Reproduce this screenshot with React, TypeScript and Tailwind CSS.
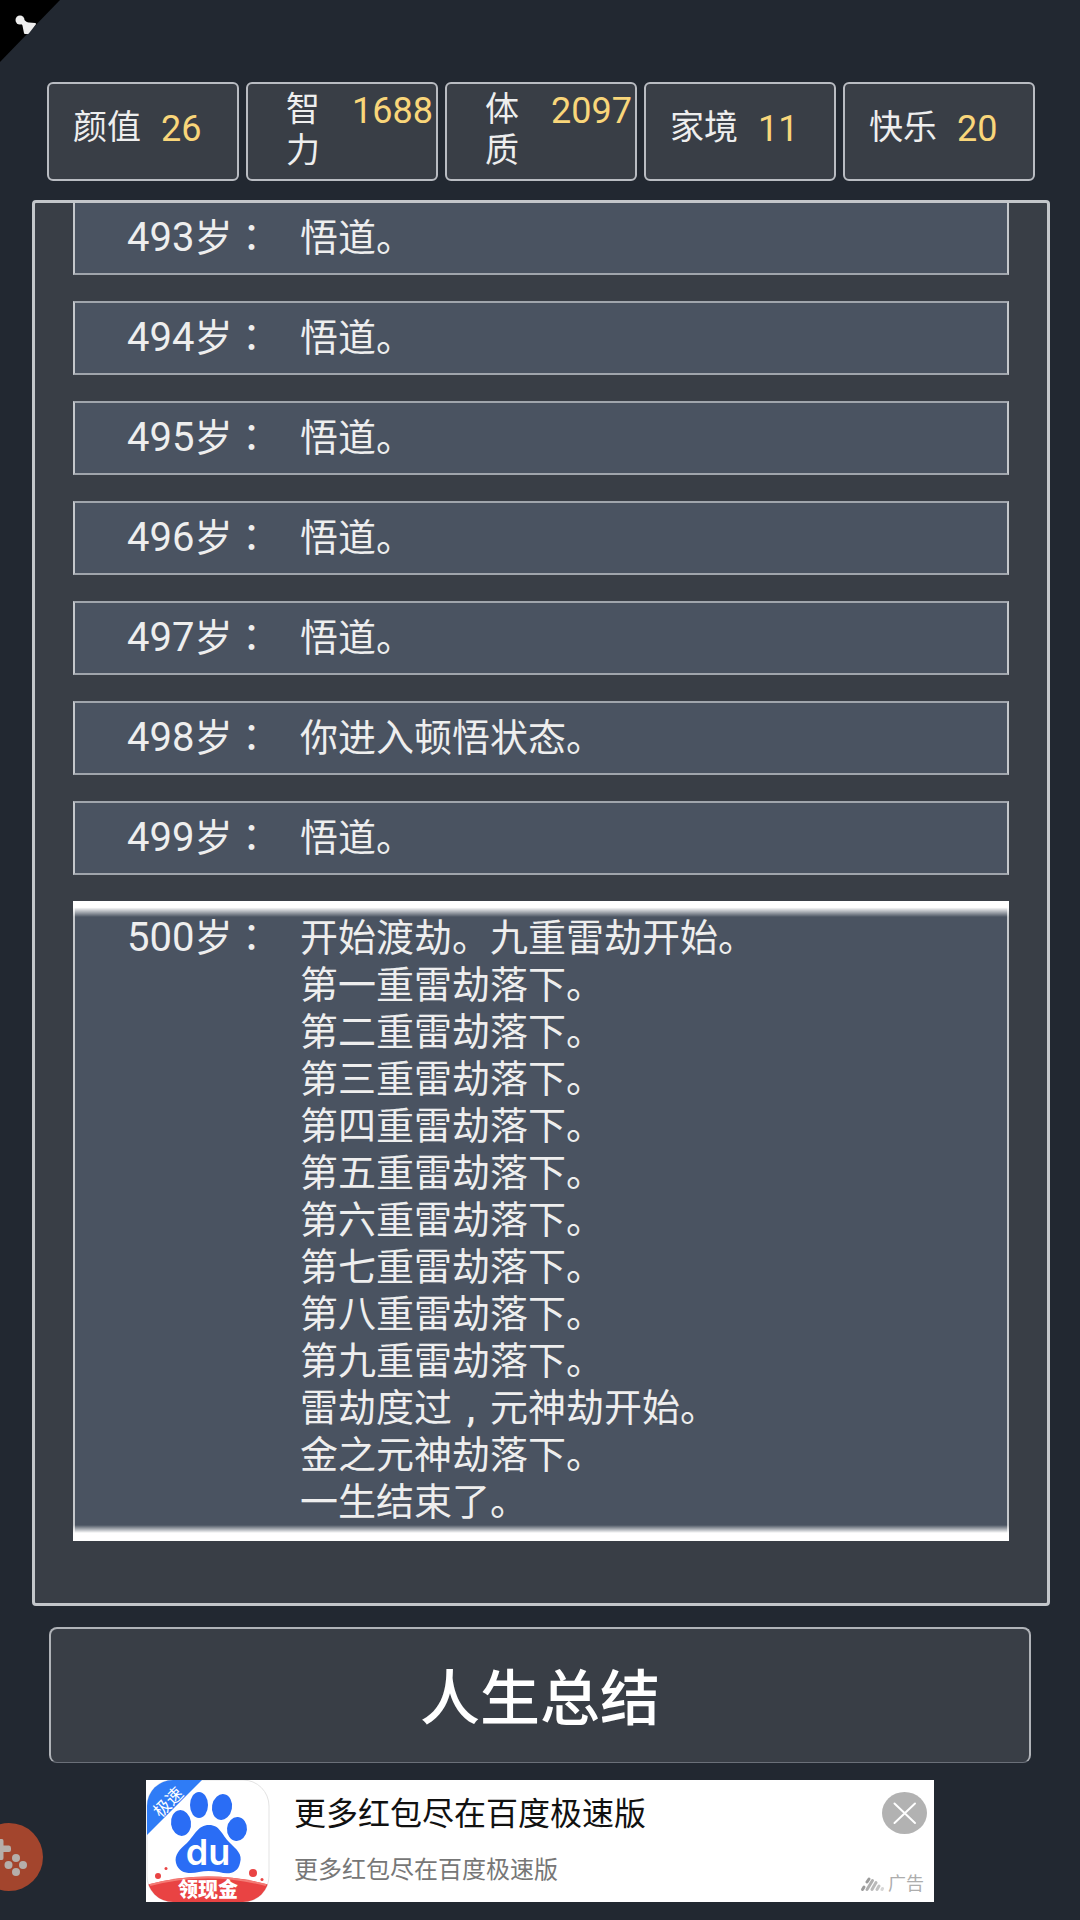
import React from "react";

interface Stat {
  label: string;
  value: number;
}

interface LifeEvent {
  age: number;
  lines: string[];
}

const stats: Stat[] = [
  { label: "颜值", value: 26 },
  { label: "智力", value: 1688 },
  { label: "体质", value: 2097 },
  { label: "家境", value: 11 },
  { label: "快乐", value: 20 },
];

const events: LifeEvent[] = [
  { age: 493, lines: ["悟道。"] },
  { age: 494, lines: ["悟道。"] },
  { age: 495, lines: ["悟道。"] },
  { age: 496, lines: ["悟道。"] },
  { age: 497, lines: ["悟道。"] },
  { age: 498, lines: ["你进入顿悟状态。"] },
  { age: 499, lines: ["悟道。"] },
  {
    age: 500,
    lines: [
      "开始渡劫。九重雷劫开始。",
      "第一重雷劫落下。",
      "第二重雷劫落下。",
      "第三重雷劫落下。",
      "第四重雷劫落下。",
      "第五重雷劫落下。",
      "第六重雷劫落下。",
      "第七重雷劫落下。",
      "第八重雷劫落下。",
      "第九重雷劫落下。",
      "雷劫度过，元神劫开始。",
      "金之元神劫落下。",
      "一生结束了。",
    ],
  },
];

function StatBox({ label, value }: Stat) {
  const wide = value > 999;
  return (
    <div className="flex h-[99px] flex-1 items-center rounded-md border-2 border-[#b9bcc2] bg-[#393e46]">
      {wide ? (
        <dl className="flex w-full items-start justify-between pb-1 pl-[38px] pr-[3px] leading-[41px]">
          <dt className="w-[34px] text-[34px] text-[#eeeeee]">{label}</dt>
          <dd className="pt-0.5 text-[36px] text-[#f9d67a]">{value}</dd>
        </dl>
      ) : (
        <dl className="flex items-start gap-5 pb-1.5 pl-6 leading-[41px]">
          <dt className="text-[34px] text-[#eeeeee]">{label}</dt>
          <dd className="pt-0.5 text-[36px] text-[#f9d67a]">{value}</dd>
        </dl>
      )}
    </div>
  );
}

// The comma sits in the middle of its cell
function EventLine({ text }: { text: string }) {
  const parts = text.split("，");
  return (
    <p>
      {parts.map((part, i) => (
        <React.Fragment key={i}>
          {i > 0 && <span className="inline-block w-[38px] text-center font-medium">,</span>}
          {part}
        </React.Fragment>
      ))}
    </p>
  );
}

function EventRow({ age, lines }: LifeEvent) {
  const last = lines.length > 1;
  return (
    <li
      className={
        last
          ? "relative flex border-2 border-[#c4c7cb] bg-[#4a5361] pb-[13px] pl-[52px] pt-3"
          : "flex h-[74px] items-center border-2 border-[#a0a5ac] border-x-[#c4c7cb] bg-[#4a5361] pl-[52px] first:h-[72px] first:border-t-0"
      }
    >
      {last && (
        <>
          <span className="absolute -inset-x-0.5 -top-0.5 h-4 bg-linear-to-b from-white from-40% to-transparent" />
          <span className="absolute -inset-x-0.5 -bottom-0.5 h-4 bg-linear-to-t from-white from-50% to-transparent" />
        </>
      )}
      <span className="w-[173px] shrink-0">
        <span className="text-[40px] leading-none">{age}</span>岁
        <span className="font-['Noto_Sans_CJK_JP',sans-serif] leading-none">：</span>
      </span>
      <div>
        {lines.map((line) => (
          <EventLine key={line} text={line} />
        ))}
      </div>
    </li>
  );
}

function BaiduIcon() {
  return (
    <svg viewBox="0 0 124 122" className="h-[122px] w-[124px] shrink-0" role="img" aria-label="百度极速版">
      <defs>
        <clipPath id="tile">
          <rect x="1" y="0" width="122" height="122" rx="26" />
        </clipPath>
      </defs>
      <rect x="1" y="0" width="122" height="122" rx="26" fill="#fff" stroke="#e3e3e3" />
      <g clipPath="url(#tile)">
        <path d="M0 0H56L0 56Z" fill="#2f7cf6" />
        <path d="M0 105Q62 88 124 105V122H0Z" fill="#e94343" />
        <path d="M4 105Q62 90 120 105" fill="none" stroke="#f47b75" strokeWidth="2" />
      </g>
      <g fill="#2a6df5">
        <ellipse cx="35" cy="43" rx="10" ry="13" transform="rotate(-8 35 43)" />
        <ellipse cx="53" cy="25" rx="9" ry="13" />
        <ellipse cx="76" cy="27" rx="10" ry="13" transform="rotate(10 76 27)" />
        <ellipse cx="91" cy="49" rx="10" ry="12" transform="rotate(5 91 49)" />
        <path d="M63 45C52 45 49 55 41 63C34 69 28 75 30 83C33 94 44 94 53 92Q62 90 73 92C83 95 92 93 94 83C97 74 90 69 84 63C75 54 74 45 63 45Z" />
      </g>
      <text x="62" y="85" textAnchor="middle" fill="#fff" fontFamily="Inter, sans-serif" fontWeight="600" fontSize="36">
        du
      </text>
      <text x="23" y="28" textAnchor="middle" fill="#fff" fontFamily="'Noto Sans CJK SC', sans-serif" fontSize="17" transform="rotate(-45 23 23)">
        极速
      </text>
      <text x="62" y="117" textAnchor="middle" fill="#fff" fontFamily="'Noto Sans CJK SC', sans-serif" fontWeight="900" fontSize="20">
        领现金
      </text>
      <g fill="#e94343">
        <circle cx="12" cy="96" r="3" />
        <circle cx="20" cy="88.500" r="1.500" />
        <circle cx="107" cy="93" r="4" />
        <circle cx="116" cy="99.500" r="1.500" />
      </g>
    </svg>
  );
}

function AdBanner() {
  return (
    <aside className="relative mx-auto mt-[17px] flex w-[788px] max-w-full bg-white">
      <BaiduIcon />
      <div className="flex flex-col justify-between pb-4 pl-6 pt-3">
        <h2 className="text-[32px] leading-[44px] text-[#111111]">更多红包尽在百度极速版</h2>
        <p className="text-[24px] leading-[32px] text-[#777777]">更多红包尽在百度极速版</p>
      </div>
      <button type="button" aria-label="关闭广告" className="absolute right-[7px] top-3">
        <svg viewBox="0 0 45 42" className="h-[42px] w-[45px]">
          <ellipse cx="22.500" cy="21" rx="22.500" ry="21" fill="#b2b2b2" />
          <path d="M12.500 11.500L33 31M33 11.500L12.500 31" stroke="#fff" strokeWidth="2" strokeLinecap="round" />
        </svg>
      </button>
      <div className="absolute bottom-1.5 right-2.5 flex items-center gap-1 text-[18px] leading-6 text-[#adadad]">
        <svg viewBox="0 0 24 16" className="h-4 w-6" fill="none" stroke="#9b9b9b" strokeWidth="3" strokeLinecap="round">
          <path d="M2.500 13.500L4 11" />
          <path d="M7 13.500L12.500 4.500" opacity=".8" />
          <path d="M7 6L9 3" />
          <path d="M12 13.500L16 6.500" opacity=".7" />
          <path d="M17 13.500L19 10" opacity=".6" />
          <path d="M22 13.500L22.500 12.500" opacity=".4" />
        </svg>
        广告
      </div>
    </aside>
  );
}

export default function App() {
  return (
    <div className="relative min-h-screen overflow-hidden bg-[#222831] pt-[82px] font-[Roboto,'Noto_Sans_CJK_SC',sans-serif]">
      <svg viewBox="0 0 60 62" className="absolute left-0 top-0 h-[62px] w-[60px]">
        <path d="M0 0H60L0 62Z" fill="#000" />
        <path d="M20 20L28 26" stroke="#eee" strokeWidth="5" />
        <circle cx="20" cy="20" r="4.500" fill="#eee" />
        <path d="M23 23L35 24L28 33L25 33Z" fill="#eee" stroke="#eee" strokeWidth="2" strokeLinejoin="round" />
      </svg>

      <header className="ml-[47px] mr-[45px] flex gap-[7px]">
        {stats.map((stat) => (
          <StatBox key={stat.label} {...stat} />
        ))}
      </header>

      <main className="ml-8 mr-[30px] mt-[19px] rounded-sm border-3 border-[#c3c6ca] bg-[#393e46] px-[38px] pb-[62px]">
        <ul className="flex flex-col gap-[26px] text-[38px] leading-[47px] text-[#eeeeee]">
          {events.map((event) => (
            <EventRow key={event.age} {...event} />
          ))}
        </ul>
      </main>

      <button
        type="button"
        className="mx-[49px] mt-[21px] block h-[136px] w-[calc(100%-98px)] rounded-lg border-2 border-b border-[#b0b3b8] border-b-[#6b7079] bg-[#393e46] pt-2 text-[60px] font-medium leading-[80px] text-white"
      >
        人生总结
      </button>

      <AdBanner />

      <svg viewBox="0 0 44 70" className="absolute bottom-[28px] left-0 h-[70px] w-[44px]">
        <circle cx="9" cy="35" r="34" fill="#a3452d" />
        <g fill="#b5aeaa">
          <path d="M0 17H2Q3.500 17 3.500 19V23.500H9Q11 23.500 11 26V28Q11 30 9 30H3.500V36Q3.500 38 2 38H0Z" />
          <circle cx="16" cy="36" r="4" />
          <circle cx="8.500" cy="43" r="4" />
          <circle cx="23" cy="43" r="4" />
          <circle cx="16" cy="50" r="4" />
        </g>
      </svg>
    </div>
  );
}
